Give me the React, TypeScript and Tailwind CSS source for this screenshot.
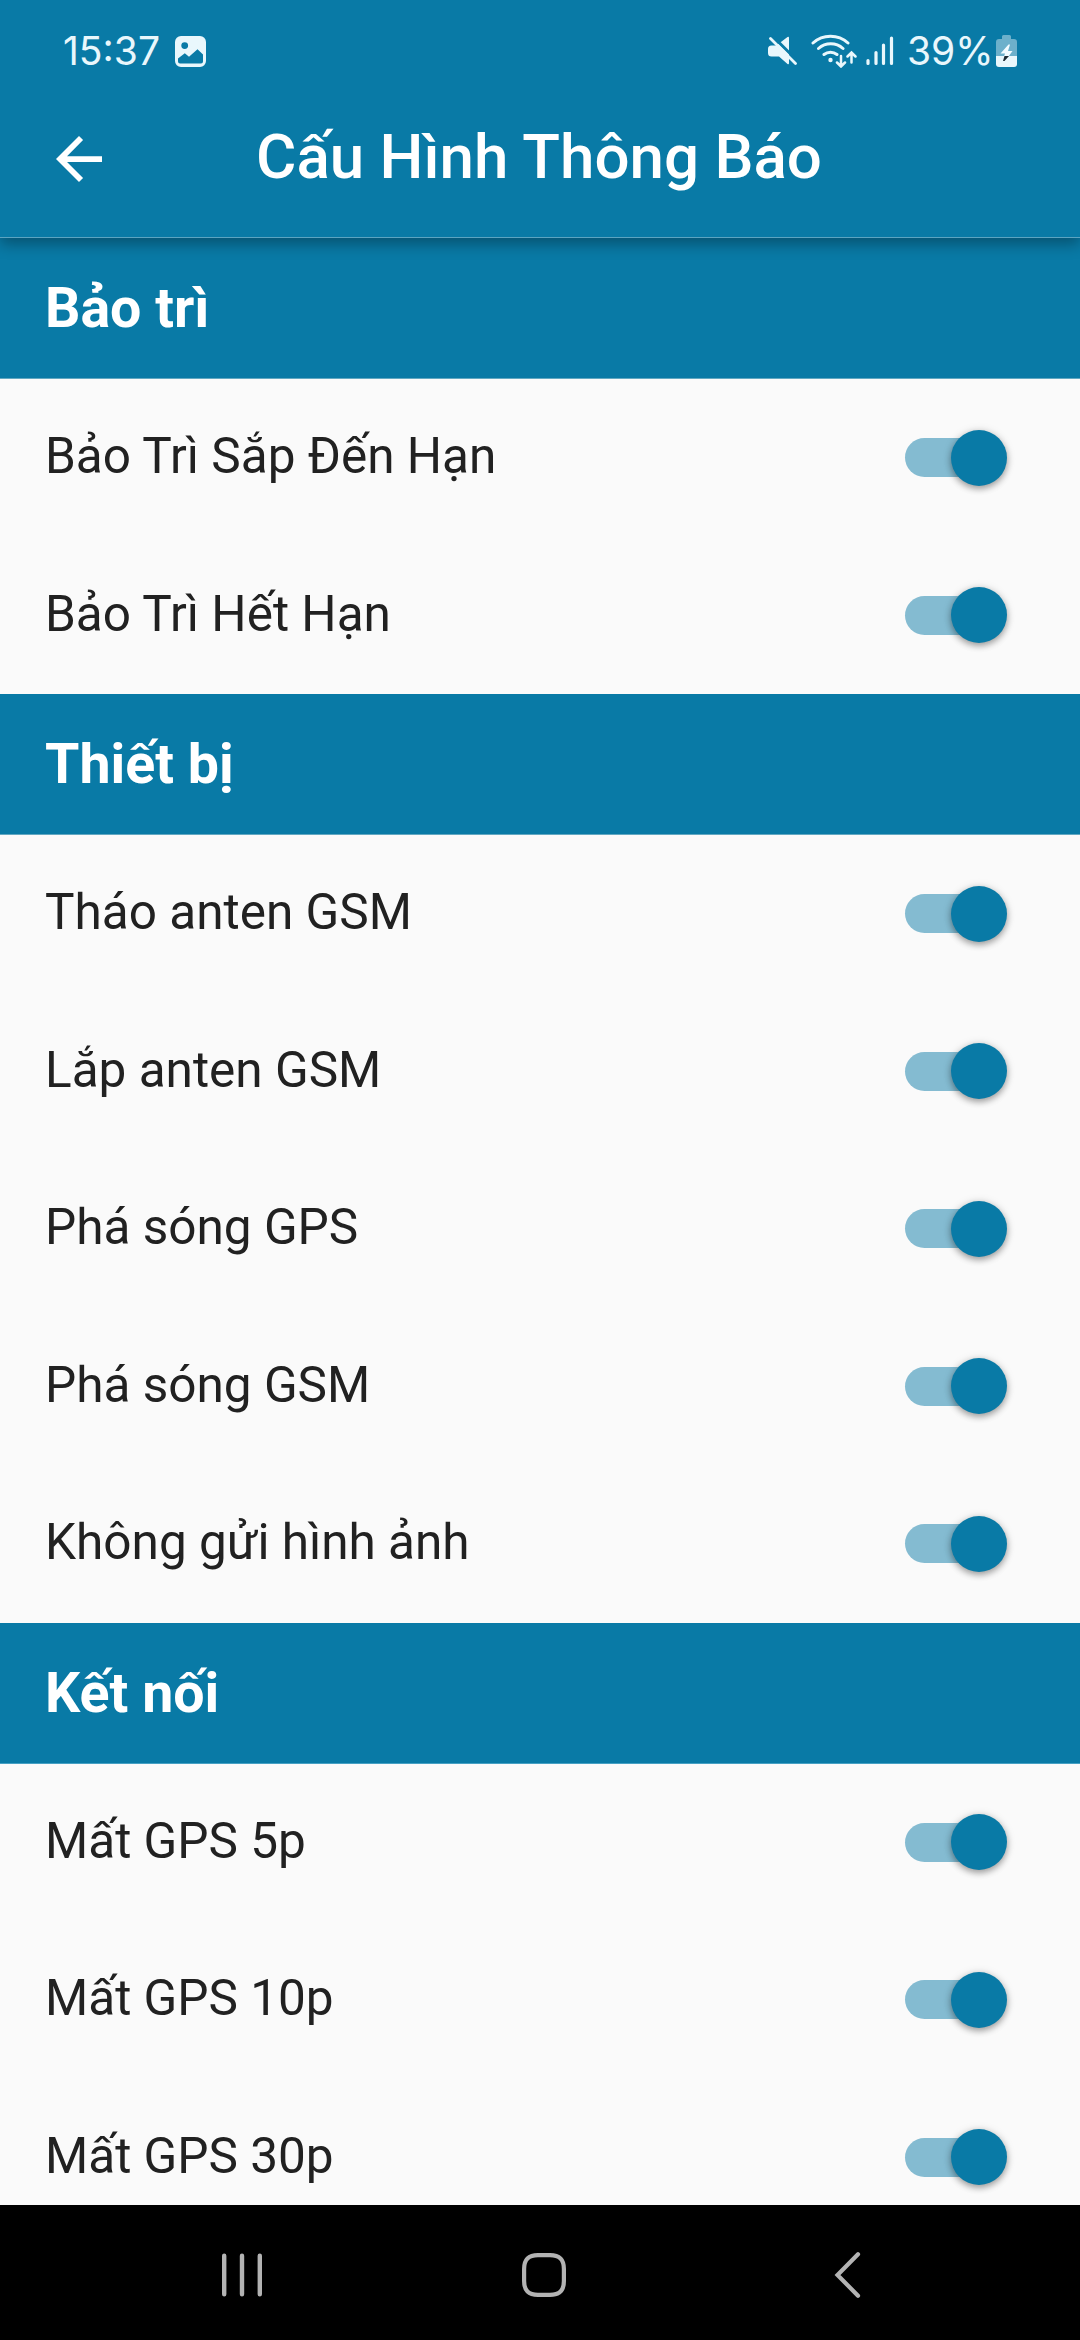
import React, { useState } from 'react';

interface Setting {
    id: string;
    label: string;
}

interface Section {
    title: string;
    line: string;
    items: Setting[];
}

const sections: Section[] = [
    {
        title: 'Bảo trì',
        line: 'border-[#62a8c2]',
        items: [
            { id: 'maintenance-soon', label: 'Bảo Trì Sắp Đến Hạn' },
            { id: 'maintenance-expired', label: 'Bảo Trì Hết Hạn' }
        ]
    },
    {
        title: 'Thiết bị',
        line: 'border-[#62a8c2]',
        items: [
            { id: 'gsm-removed', label: 'Tháo anten GSM' },
            { id: 'gsm-attached', label: 'Lắp anten GSM' },
            { id: 'gps-jammed', label: 'Phá sóng GPS' },
            { id: 'gsm-jammed', label: 'Phá sóng GSM' },
            { id: 'no-image', label: 'Không gửi hình ảnh' }
        ]
    },
    {
        title: 'Kết nối',
        line: 'border-[#45a0c3]',
        items: [
            { id: 'gps-5', label: 'Mất GPS 5p' },
            { id: 'gps-10', label: 'Mất GPS 10p' },
            { id: 'gps-30', label: 'Mất GPS 30p' }
        ]
    }
];

const StatusBar = () => (
    <div className="h-[99px] flex items-start justify-between pl-[63px] pr-[63px] pt-[34px] text-[#e9f7fc] font-[Inter,sans-serif] font-normal text-[39px] leading-[34px]">
        <div className="flex items-center">
            <span className="w-[112px]">15:37</span>
            <svg width="31" height="31" viewBox="0 0 31 31" className="mt-px">
                <path fillRule="evenodd" fill="currentColor" d="M6 0h19a6 6 0 0 1 6 6v19a6 6 0 0 1-6 6H6a6 6 0 0 1-6-6V6a6 6 0 0 1 6-6zM9.7 6.200a3.400 3.400 0 1 0 0 6.800 3.400 3.400 0 0 0 0-6.800zM3 22.500v3a2 2 0 0 0 2 2h21a2 2 0 0 0 2-2V18.500l-5.500-5.300L14 20.800l-4.200-3.600z" />
            </svg>
        </div>
        <div className="flex items-center">
            <svg width="30" height="30" viewBox="0 0 30 30" className="mr-[14px]">
                <path fill="currentColor" d="M12 7.500 20.500 1q1.500-1 1.500 1v25q0 2-1.500 1L12 20.500H4.500A3.500 3.500 0 0 1 1 17v-4a3.500 3.500 0 0 1 3.500-3.500H9z" />
                <path d="M5.500 0 32.500 27" stroke="#097aa6" strokeWidth="3" />
                <path d="M3.500 2.500 28.500 27.500" stroke="currentColor" strokeWidth="2.800" strokeLinecap="round" />
            </svg>
            <svg width="46" height="34" viewBox="0 0 46 34" className="mr-[9px]" fill="none" stroke="currentColor" strokeWidth="3" strokeLinecap="round">
                <path d="M2 9a26 26 0 0 1 35 0M7.500 14.500a18.500 18.500 0 0 1 24.500 0M13 20.500a10.500 10.500 0 0 1 13 0" />
                <circle cx="19.500" cy="26" r="2.200" fill="currentColor" stroke="none" />
                <path strokeWidth="2.500" d="M30 22v10M26 28.500l4 4 4-4M40.500 28.500V19M36.500 22.500l4-4 4 4" />
            </svg>
            <svg width="28" height="30" viewBox="0 0 28 30" className="mr-[13px]" stroke="currentColor" strokeWidth="3.200" strokeLinecap="round">
                <path d="M2 24.500v3M10 16.500v11M17.500 9v18.500M25.500 2v25.500" />
            </svg>
            <span className="w-[89px]">39%</span>
            <svg width="21" height="32" viewBox="0 0 21 32">
                <path fill="#6cb0cb" d="M6 1.500Q6 0 7.500 0h6Q15 0 15 1.500V4h3a3 3 0 0 1 3 3v14H0V7a3 3 0 0 1 3-3h3z" />
                <path fill="currentColor" d="M0 21h21v8a3 3 0 0 1-3 3H3a3 3 0 0 1-3-3z" />
                <path fill="#f2fbff" d="M12.500 9.500 4.500 18.500h4.500L8 21.500h4.500l4-5.500h-4.500l2-6.500z" />
                <path fill="#1c2a33" d="M8.500 21H13l-4.500 5h-1.500z" />
            </svg>
        </div>
    </div>
);

const AppBar = () => (
    <header className="relative z-10 bg-[#097aa6] border-b border-[#5ba4c1] shadow-[0_6px_14px_rgba(0,0,0,0.32)]">
        <StatusBar />
        <div className="h-[138px] flex items-center text-white">
            <button className="w-[157px] h-full pl-[56px]">
                <svg width="46" height="46" viewBox="0 0 16 16" className="-mt-[18px]" fill="currentColor">
                    <path d="M16 7H3.830l5.590-5.590L8 0 0 8l8 8 1.410-1.410L3.830 9H16z" />
                </svg>
            </button>
            <h1 className="w-[764px] -mt-[22px] text-center text-[61.875px] leading-[72px] font-medium">Cấu Hình Thông Báo</h1>
        </div>
    </header>
);

const Toggle = ({ on, onChange }: { on: boolean; onChange: () => void }) => (
    <button role="switch" aria-checked={on} onClick={onChange} className={`w-[93px] h-[39px] rounded-full flex items-center ${on ? 'bg-[#84bbd1]' : 'bg-[#9e9e9e]'}`}>
        <span className={`size-[56px] shrink-0 rounded-full shadow-[0_3px_6px_rgba(0,0,0,0.3),0_1px_10px_rgba(0,0,0,0.15)] ${on ? 'translate-x-[46px] bg-[#097aa6]' : '-translate-x-[9px] bg-white'}`} />
    </button>
);

const NavBar = () => (
    <nav className="h-[135px] shrink-0 bg-black flex items-center pl-[220px] pt-[5px] text-[#b3b3b3]">
        <svg width="44" height="46" viewBox="0 0 44 46" stroke="currentColor" strokeWidth="4.400" strokeLinecap="round">
            <path d="M4.200 3.700v38.600M22 3.700v38.600M39.800 3.700v38.600" />
        </svg>
        <svg width="44" height="44" viewBox="0 0 44 44" className="ml-[258px]" fill="none" stroke="currentColor" strokeWidth="4.200">
            <path d="M16 2.100h12C37.500 2.100 41.900 6.500 41.900 16v12c0 9.500-4.400 13.900-13.900 13.900H16C6.500 41.900 2.100 37.500 2.100 28V16C2.100 6.500 6.500 2.100 16 2.100z" />
        </svg>
        <svg width="28" height="46" viewBox="0 0 28 46" className="ml-[267px]" fill="none" stroke="currentColor" strokeWidth="4.200" strokeLinecap="round">
            <path d="M25 2.300 4.500 23 25 43.700" />
        </svg>
    </nav>
);

export default function App() {
    const [disabled, setDisabled] = useState<string[]>([]);
    const toggle = (id: string) => setDisabled(disabled.includes(id) ? disabled.filter(d => d !== id) : [...disabled, id]);

    return (
        <div className="w-[1080px] h-[2340px] flex flex-col overflow-hidden bg-[#fafafa] font-[Roboto,sans-serif]">
            <AppBar />
            <main className="flex-1 min-h-0 overflow-hidden">
                {sections.map(section => (
                    <section key={section.title}>
                        <h2 className={`h-[141px] flex items-center pl-[45px] pt-[2px] bg-[#097aa6] border-b ${section.line} text-white text-[55.5px] leading-[66px] font-bold`}>{section.title}</h2>
                        {section.items.map(item => (
                            <div key={item.id} className="h-[157.5px] flex items-center justify-between pl-[45px] pr-[82px]">
                                <span className="-mt-[3px] text-[49.5px] leading-[60px] text-[#212121]">{item.label}</span>
                                <Toggle on={!disabled.includes(item.id)} onChange={() => toggle(item.id)} />
                            </div>
                        ))}
                    </section>
                ))}
            </main>
            <NavBar />
        </div>
    );
}
